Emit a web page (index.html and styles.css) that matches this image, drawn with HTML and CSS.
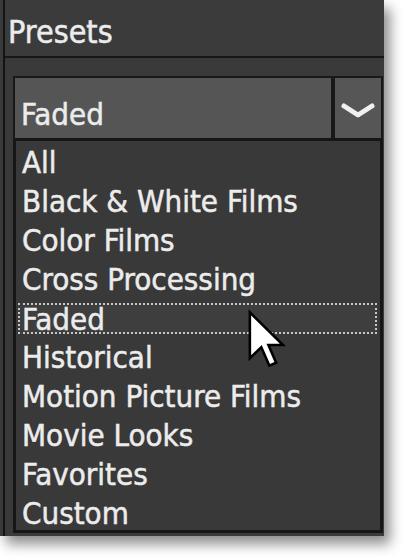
FILE: index.html
```html
<!DOCTYPE html>
<html>
<head>
<meta charset="utf-8">
<link rel="stylesheet" href="styles.css">
</head>
<body>
<div class="panel">
  <div class="frame">
    <div class="header">Presets</div>
    <div class="content">
      <div class="combo">
        <div class="field">Faded</div>
        <div class="button">
          <svg class="chev" width="36" height="18" viewBox="0 0 36 18"><path d="M4 4 L18 13 L32 4" fill="none" stroke="#f0f0f0" stroke-width="5" stroke-linecap="round" stroke-linejoin="round"/></svg>
        </div>
      </div>
      <ul class="list">
        <li class="item">All</li>
        <li class="item">Black &amp; White Films</li>
        <li class="item">Color Films</li>
        <li class="item">Cross Processing</li>
        <li class="item focused"><span class="focus">Faded</span></li>
        <li class="item">Historical</li>
        <li class="item">Motion Picture Films</li>
        <li class="item">Movie Looks</li>
        <li class="item">Favorites</li>
        <li class="item">Custom</li>
      </ul>
    </div>
  </div>
  <svg class="cursor" width="40" height="64" viewBox="0 0 14 22"><path d="M1 1 L1 17 L5 13.2 L7.8 19.6 L10.2 18.6 L7.5 12.4 L12.6 12.4 Z" fill="#ffffff" stroke="#000000" stroke-width="0.9" stroke-linejoin="miter"/></svg>
</div>
</body>
</html>
```
FILE: styles.css
```css
html, body {
  margin: 0;
  padding: 0;
  background: #ffffff;
}
body {
  width: 404px;
  height: 558px;
  overflow: hidden;
  font-family: "DejaVu Sans", sans-serif;
  font-stretch: condensed;
  color: #ececec;
  -webkit-text-stroke: 0.5px #ececec;
}
.panel {
  position: relative;
  width: 384px;
  height: 536px;
  background: #3a3a3a;
  box-shadow: 6px 8px 12px rgba(0, 0, 0, 0.45);
  padding-left: 3px;
  box-sizing: border-box;
}
.frame {
  height: 100%;
  border-left: 2px solid #141414;
}
.header {
  height: 58px;
  border-bottom: 2px solid #171717;
  font-size: 32px;
  line-height: 64px;
  padding-left: 3px;
  box-sizing: border-box;
  background: #3b3b3b;
}
.content {
  padding: 18px 1px 0 8px;
}
.combo {
  display: flex;
  height: 62px;
  border: 2px solid #181818;
  border-bottom: 0;
  box-sizing: border-box;
  background: #181818;
  gap: 4px;
}
.field {
  flex: 1;
  background: #555555;
  font-size: 31px;
  line-height: 60px;
  padding: 6px 0 0 6px;
  box-sizing: border-box;
}
.button {
  width: 46px;
  background: #565656;
  display: flex;
  align-items: center;
  justify-content: center;
}
.chev {
  display: block;
  margin-top: 6px;
}
.list {
  list-style: none;
  margin: 0;
  padding: 2px 0 0 0;
  border: 3px solid #161616;
  height: 395px;
  box-sizing: border-box;
  background: #393939;
}
.item {
  height: 39px;
  font-size: 31px;
  line-height: 39px;
  padding-left: 6px;
}
.focused {
  padding: 4px 3px 4px 2px;
  box-sizing: border-box;
}
.focus {
  display: block;
  height: 31px;
  line-height: 29px;
  border: 2px dotted #c8c8c8;
  box-sizing: border-box;
  padding-left: 2px;
  background: #3e3e3e;
}
.cursor {
  position: absolute;
  left: 247px;
  top: 309px;
}
```
